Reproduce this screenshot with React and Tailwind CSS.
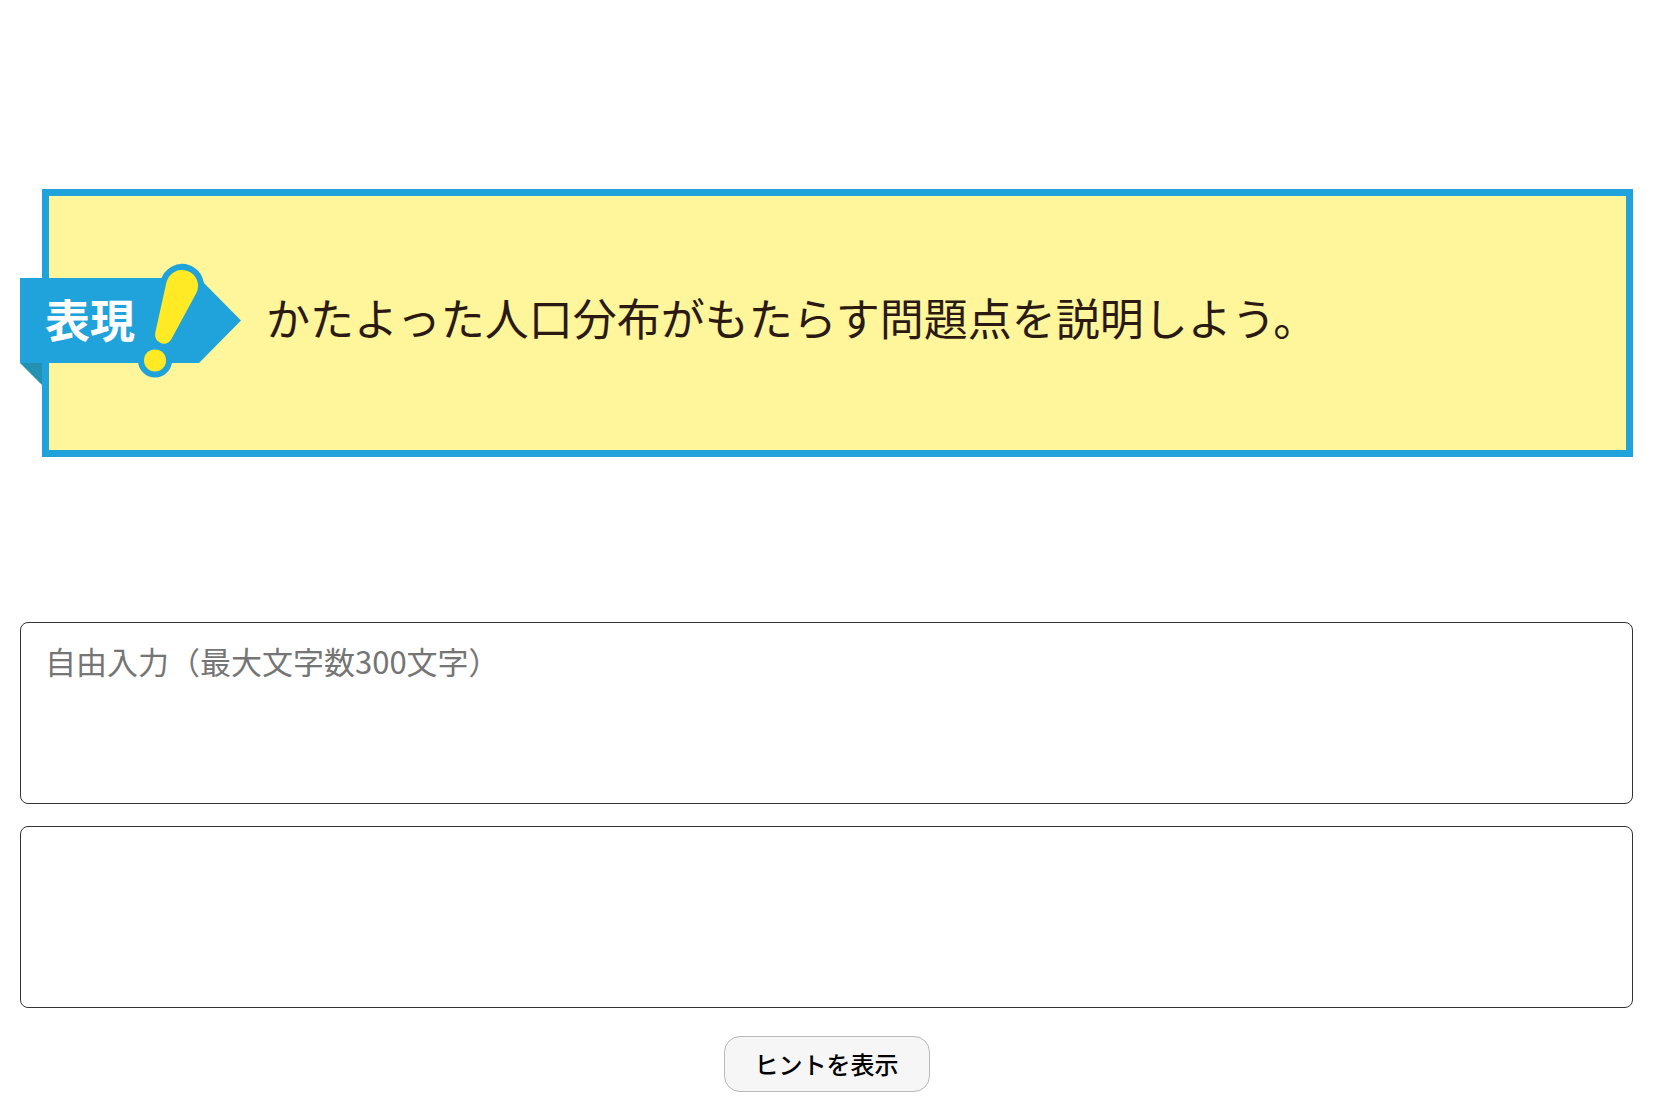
import React from 'react'

function Ribbon(){
  return <svg viewBox="0 0 222 123" width="222" height="123" className="-ml-[29px] shrink-0" role="img" aria-label="表現">
    <path d="M0 100H22V122Z" fill="#2391b0" />
    <path d="M0 15H179L221 57.5L179 100H0Z" fill="#1fa3da" />
    <g fill="#1fa3da" stroke="#1fa3da" strokeWidth="12">
      <path d="M146.4 19.6A16 16 0 1 1 176.1 30.6L151.3 76.2A8.7 8.7 0 0 1 135.2 70.1Z" />
      <circle cx="135" cy="97.4" r="11" />
    </g>
    <path d="M146.4 19.6A16 16 0 1 1 176.1 30.6L151.3 76.2A8.7 8.7 0 0 1 135.2 70.1Z" fill="#ffea25" />
    <circle cx="135" cy="97.4" r="11" fill="#ffea25" />
    <text x="25" y="75" fill="white" className="text-[45px] font-bold">表現</text>
  </svg>
}

function Question({ children }){
  return <section className="flex min-h-[268px] items-center border-7 border-[#1fa3da] bg-[#fff59b] ml-[22px] pt-0.5">
    <Ribbon />
    <p className="ml-6 pb-3.5 text-[44px] leading-none text-[#2a1a12]">{children}</p>
  </section>
}

function TextBox(props){
  return <textarea
    className="block h-[182px] w-full resize-none rounded-lg border border-[#333336] bg-white px-6 py-5 text-[31px] leading-9 text-black outline-none placeholder:text-[#757575]"
    {...props}
  />
}

export default function App(){
  const [answer, setAnswer] = React.useState('')
  const [hint, setHint] = React.useState(false)

  return <main lang="ja" className="pl-5 pr-[21px] pt-[189px] font-['Noto_Sans_CJK_JP',sans-serif]">
    <Question>かたよった人口分布がもたらす問題点を説明しよう。</Question>
    <div className="mt-[165px] flex flex-col gap-[22px]">
      <TextBox
        aria-label="自由入力"
        placeholder="自由入力（最大文字数300文字）"
        maxLength={300}
        value={answer}
        onChange={(e) => setAnswer(e.target.value)}
      />
      <TextBox aria-label="ヒント" readOnly />
    </div>
    <div className="mt-7 flex justify-center">
      <button
        type="button"
        aria-pressed={hint}
        onClick={() => setHint(!hint)}
        className="rounded-2xl border border-[#b8b8b8] bg-[#f6f6f6] px-[30px] py-[9px] text-2xl leading-9 font-medium text-black"
      >
        ヒントを表示
      </button>
    </div>
  </main>
}
